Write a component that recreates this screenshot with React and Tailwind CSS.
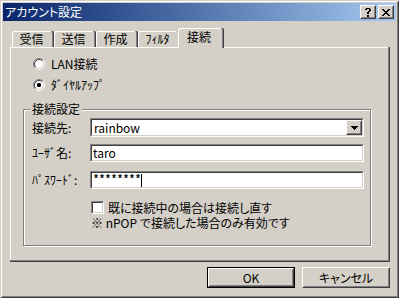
import React from "react";

const HELP = [
  ".####.",
  "##..##",
  "....##",
  "...##.",
  "..##..",
  "..##..",
  "......",
  "..##..",
  "..##..",
];

const CLOSE = [
  "##....##",
  ".##..##.",
  "..####..",
  "...##...",
  "..####..",
  ".##..##.",
  "##....##",
];

const ARROW = ["#######", ".#####.", "..###..", "...#..."];

function Pixels({ rows, className = "" }) {
  const w = rows[0].length;
  const h = rows.length;
  const rects = [];
  rows.forEach((r, y) => {
    [...r].forEach((c, x) => {
      if (c === "#") rects.push(<rect key={x + "-" + y} x={x} y={y} width="1" height="1" fill="#000" />);
    });
  });
  return (
    <svg width={w} height={h} viewBox={`0 0 ${w} ${h}`} shapeRendering="crispEdges" className={"block " + className}>
      {rects}
    </svg>
  );
}

function Raised({ className = "", innerClassName = "", children }) {
  return (
    <div className={"border border-t-white border-l-white border-r-[#404040] border-b-[#404040] " + className}>
      <div className={"h-full w-full border border-t-[#d4d0c8] border-l-[#d4d0c8] border-r-[#808080] border-b-[#808080] bg-[#d4d0c8] flex items-center justify-center " + innerClassName}>
        {children}
      </div>
    </div>
  );
}

function Sunken({ className = "", innerClassName = "", children }) {
  return (
    <div className={"border border-t-[#808080] border-l-[#808080] border-r-white border-b-white " + className}>
      <div className={"h-full w-full border border-t-[#404040] border-l-[#404040] border-r-[#d4d0c8] border-b-[#d4d0c8] bg-white flex items-center " + innerClassName}>
        {children}
      </div>
    </div>
  );
}

function Radio({ label, checked }) {
  return (
    <div className="flex items-center h-[12px] gap-[6px]">
      <svg width="12" height="12" viewBox="0 0 12 12" className="block">
        <circle cx="6" cy="6" r="4.5" fill="#ffffff" />
        <path d="M2.11 9.89 A5.5 5.5 0 0 1 9.89 2.11" fill="none" stroke="#808080" strokeWidth="1" />
        <path d="M9.89 2.11 A5.5 5.5 0 0 1 2.11 9.89" fill="none" stroke="#ffffff" strokeWidth="1" />
        <path d="M2.82 9.18 A4.5 4.5 0 0 1 9.18 2.82" fill="none" stroke="#404040" strokeWidth="1" />
        <path d="M9.18 2.82 A4.5 4.5 0 0 1 2.82 9.18" fill="none" stroke="#d4d0c8" strokeWidth="1" />
        {checked && <rect x="4" y="4" width="4" height="4" rx="1.2" fill="#000" />}
      </svg>
      <span className="leading-[12px] whitespace-nowrap">{label}</span>
    </div>
  );
}

function Tab({ label }) {
  return (
    <div className="w-[42px] h-[16px] flex items-center justify-center pr-[3px] rounded-t-[2px] shadow-[inset_-1px_0_0_#404040,inset_-2px_0_0_#808080,inset_1px_1px_0_#ffffff]">
      <span className="leading-[12px] whitespace-nowrap">{label}</span>
    </div>
  );
}

export default function App() {
  return (
    <div className="w-[399px] h-[298px] bg-[#d4d0c8] p-[3px] flex flex-col text-[12px] text-black font-['Noto_Sans_CJK_JP',sans-serif] [font-feature-settings:'palt'] shadow-[inset_1px_1px_0_#d4d0c8,inset_-1px_-1px_0_#404040,inset_2px_2px_0_#ffffff,inset_-2px_-2px_0_#808080] overflow-hidden">
      {/* Title bar */}
      <div className="h-[18px] flex items-center justify-between bg-linear-to-r from-[#0a246a] to-[#a6caf0]">
        <span className="pl-[2px] text-white leading-[14px] whitespace-nowrap">アカウント設定</span>
        <div className="flex gap-[2px] pr-[2px]">
          <Raised className="w-[16px] h-[14px]">
            <Pixels rows={HELP} />
          </Raised>
          <Raised className="w-[16px] h-[14px]">
            <Pixels rows={CLOSE} />
          </Raised>
        </div>
      </div>

      {/* Body */}
      <div className="flex-1 flex flex-col pl-[7px] pr-[6px]">
        {/* Tabs */}
        <div className="mt-[7px] h-[19px] flex items-end pl-[2px]">
          <Tab label="受信" />
          <Tab label="送信" />
          <Tab label="作成" />
          <Tab label="ﾌｨﾙﾀ" />
          <div className="relative z-10 -ml-[2px] -mb-[1px] w-[46px] h-[20px] flex items-center justify-center pr-[4px] pb-[2px] bg-[#d4d0c8] rounded-t-[2px] shadow-[inset_-1px_0_0_#404040,inset_-2px_0_0_#808080,inset_1px_1px_0_#ffffff]">
            <span className="leading-[12px] whitespace-nowrap">接続</span>
          </div>
        </div>

        {/* Tab page */}
        <div className="w-[380px] h-[215px] flex flex-col shadow-[inset_-1px_-1px_0_#404040,inset_-2px_-2px_0_#808080,inset_1px_1px_0_#ffffff]">
          <div className="pl-[23px] pt-[11px] flex flex-col gap-[9px]">
            <Radio label="LAN接続" />
            <Radio label="ﾀﾞｲﾔﾙｱｯﾌﾟ" checked />
          </div>

          <fieldset className="ml-[13px] mt-[11px] w-[348px] h-[144px] border border-[#808080] pl-[6px] shadow-[1px_1px_0_#ffffff,inset_1px_1px_0_#ffffff]">
            <legend className="px-[2px] leading-[14px] bg-[#d4d0c8] whitespace-nowrap">接続設定</legend>

            <div className="ml-[2px] mt-[2px] flex items-center h-[19px]">
              <span className="w-[58px] whitespace-nowrap">接続先:</span>
              <Sunken className="w-[274px] h-full" innerClassName="justify-between">
                <span className="pl-[2px] leading-[12px]">rainbow</span>
                <Raised className="w-[16px] h-full">
                  <Pixels rows={ARROW} />
                </Raised>
              </Sunken>
            </div>

            <div className="ml-[2px] mt-[7px] flex items-center h-[18px]">
              <span className="w-[58px] whitespace-nowrap">ﾕｰｻﾞ名:</span>
              <Sunken className="w-[274px] h-full">
                <span className="pl-[1px] leading-[12px]">taro</span>
              </Sunken>
            </div>

            <div className="ml-[2px] mt-[9px] flex items-center h-[18px]">
              <span className="w-[58px] whitespace-nowrap">ﾊﾟｽﾜｰﾄﾞ:</span>
              <Sunken className="w-[274px] h-full">
                <span className="pl-[1px] font-['Liberation_Mono',monospace] text-[10px] leading-[12px] font-bold">********</span>
                <span className="block w-[1px] h-[13px] bg-black" />
              </Sunken>
            </div>

            <div className="ml-[61px] mt-[12px] flex items-center h-[13px] gap-[4px]">
              <Sunken className="w-[13px] h-[13px]" />
              <span className="leading-[13px] whitespace-nowrap">既に接続中の場合は接続し直す</span>
            </div>
            <div className="ml-[61px] mt-[3px] leading-[12px] whitespace-nowrap">※ nPOP で接続した場合のみ有効です</div>
          </fieldset>
        </div>

        {/* Buttons */}
        <div className="mt-[5px] flex justify-end gap-[7px]">
          <div className="w-[88px] h-[21px] border border-black">
            <Raised className="w-full h-full">
              <span className="leading-[12px]">OK</span>
            </Raised>
          </div>
          <Raised className="w-[88px] h-[21px]">
            <span className="leading-[12px] whitespace-nowrap">キャンセル</span>
          </Raised>
        </div>
      </div>
    </div>
  );
}
